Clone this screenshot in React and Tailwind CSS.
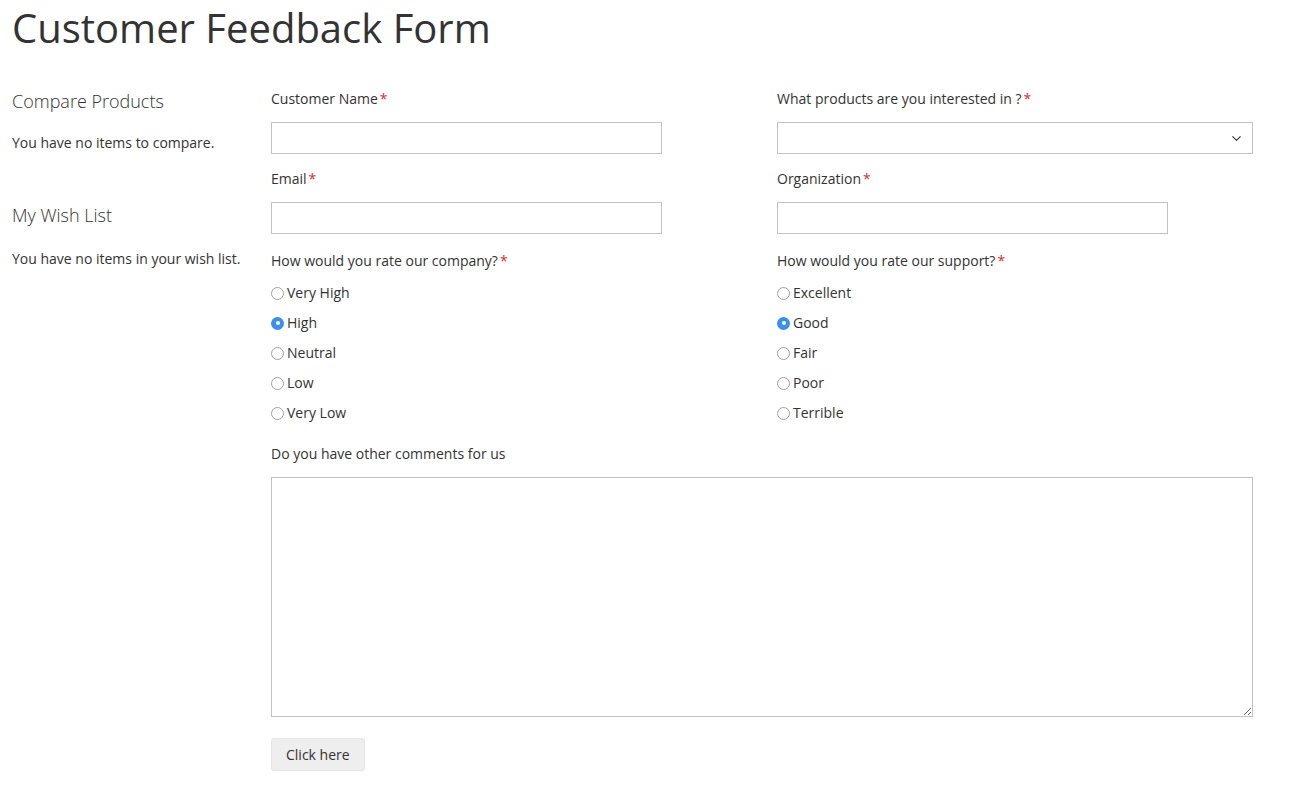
import { ChevronDown } from 'lucide-react';

function Label({ text, required, className = 'mb-[13px]' }) {
    return (
        <div className={`leading-5 text-[14px] ${className}`}>
            {text}
            {required && <span className="text-[#e02b27] ml-[2px]">*</span>}
        </div>
    );
}

function Radio({ label, checked }) {
    return (
        <div className="h-5 flex items-center mb-[10px]">
            {checked ? (
                <span className="w-[13px] h-[13px] rounded-full bg-[#3b8eed] flex items-center justify-center">
                    <span className="w-[4px] h-[4px] rounded-full bg-white"></span>
                </span>
            ) : (
                <span className="w-[13px] h-[13px] rounded-full border border-[#a0a0a0] bg-white"></span>
            )}
            <span className="ml-[3px] text-[14px] leading-5">{label}</span>
        </div>
    );
}

export default function App() {
    const company = ['Very High', 'High', 'Neutral', 'Low', 'Very Low'];
    const support = ['Excellent', 'Good', 'Fair', 'Poor', 'Terrible'];

    return (
        <div className="min-h-[787px] bg-white text-[#333] px-[12px] pt-[4px]" style={{ fontFamily: '"Open Sans", sans-serif' }}>
            <h1 className="text-[40px] leading-[48px] font-normal">Customer Feedback Form</h1>

            <div className="flex mt-[37px]">
                {/* Sidebar */}
                <div className="w-[259px] shrink-0">
                    <div className="text-[18px] font-light leading-6">Compare Products</div>
                    <div className="text-[14px] mt-[20px] leading-5">You have no items to compare.</div>
                    <div className="text-[18px] font-light leading-6 mt-[50px]">My Wish List</div>
                    <div className="text-[14px] mt-[22px] leading-5">You have no items in your wish list.</div>
                </div>

                {/* Form */}
                <div className="w-[982px]">
                    <div className="grid grid-cols-[506px_476px]">
                        <div>
                            <Label text="Customer Name" required />
                            <input className="w-[391px] h-8 border border-[#c2c2c2] mb-[15px] block" />
                            <Label text="Email" required />
                            <input className="w-[391px] h-8 border border-[#c2c2c2] mb-[15px] block" />
                            <Label text="How would you rate our company?" required className="pt-[2px] mb-[12px]" />
                            <div>
                                {company.map(c => <Radio key={c} label={c} checked={c === 'High'} />)}
                            </div>
                        </div>
                        <div>
                            <Label text="What products are you interested in ?" required />
                            <div className="w-[476px] h-8 border border-[#c2c2c2] mb-[15px] flex items-center justify-end pr-[8px]">
                                <ChevronDown size={15} strokeWidth={1.75} className="text-[#333]" />
                            </div>
                            <Label text="Organization" required />
                            <input className="w-[391px] h-8 border border-[#c2c2c2] mb-[15px] block" />
                            <Label text="How would you rate our support?" required className="pt-[2px] mb-[12px]" />
                            <div>
                                {support.map(c => <Radio key={c} label={c} checked={c === 'Good'} />)}
                            </div>
                        </div>
                    </div>

                    <div className="mt-[11px]">
                        <Label text="Do you have other comments for us" />
                        <textarea className="w-[982px] h-[240px] border border-[#c2c2c2] block"></textarea>
                    </div>

                    <button className="mt-[21px] h-[33px] px-[14px] bg-[#eeeeee] border border-[#e6e6e6] rounded-[3px] text-[14px] text-[#333]">
                        Click here
                    </button>
                </div>
            </div>
        </div>
    );
}
